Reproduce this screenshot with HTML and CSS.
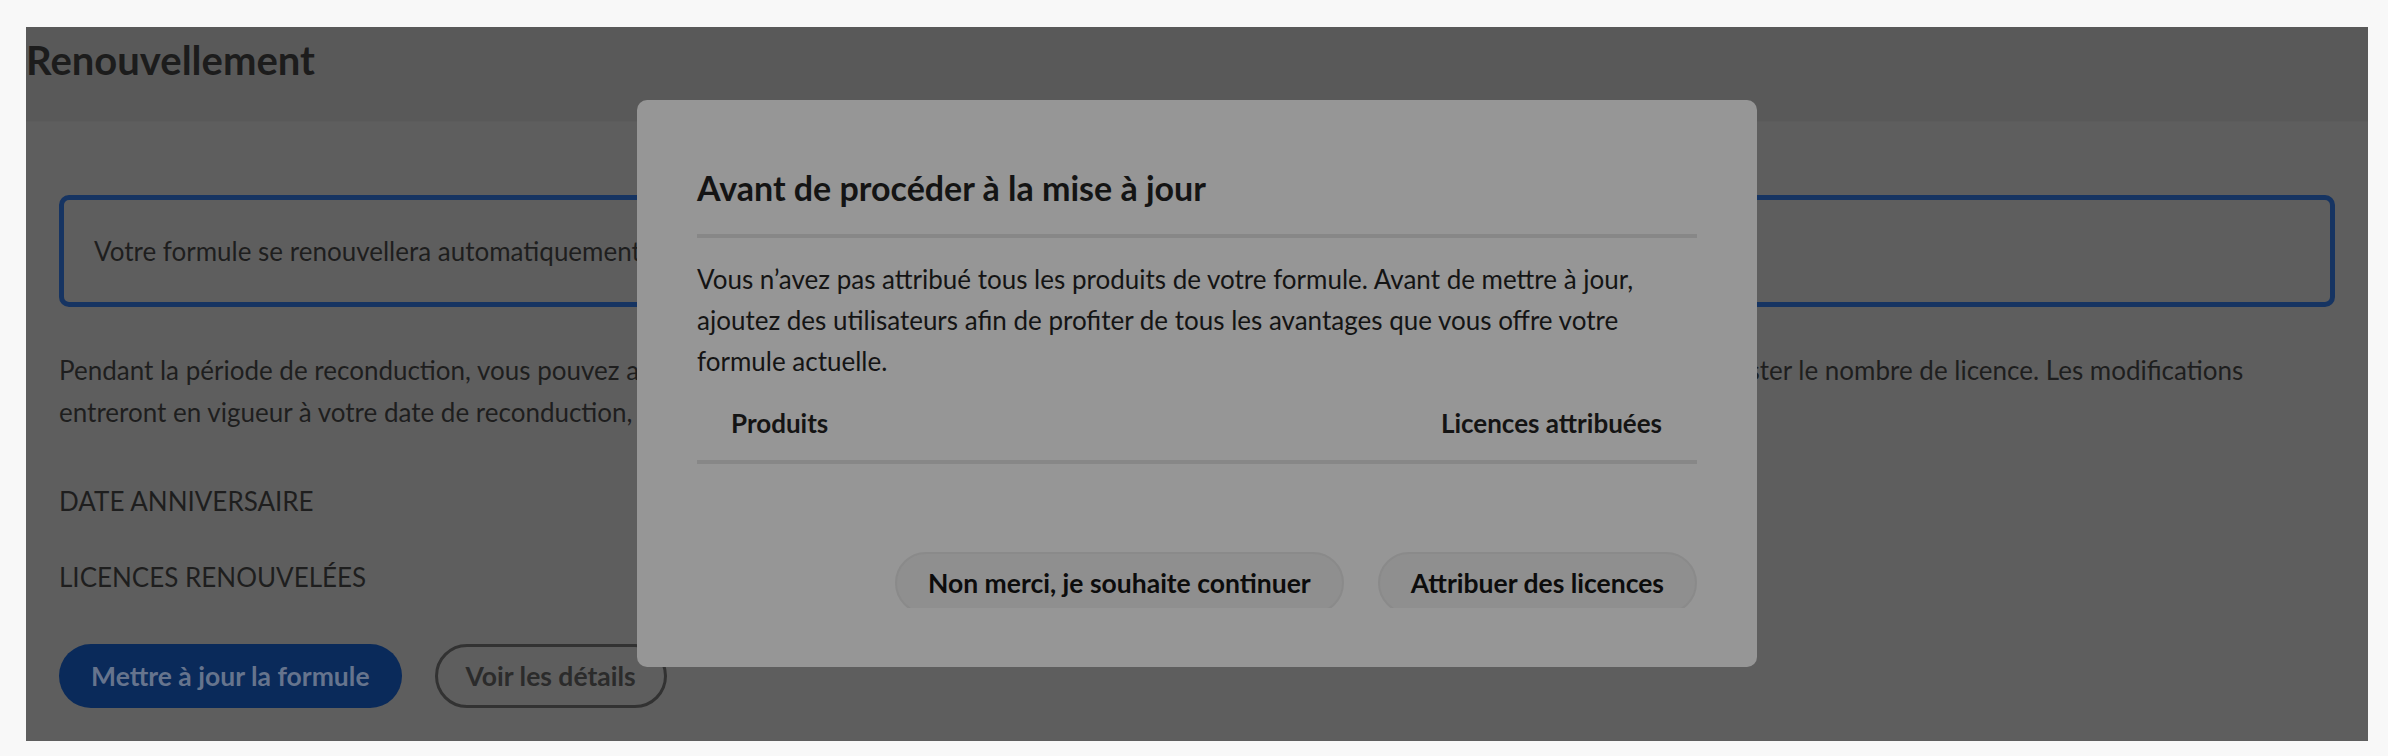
FILE: index.html
```html
<!DOCTYPE html>
<html lang="fr">
<head>
  <meta charset="UTF-8">
  <meta name="viewport" content="width=device-width, initial-scale=1.0">
  <title>Renouvellement</title>
  <link rel="stylesheet" href="styles.css">
</head>

<body>
  <div class="page">
    <div class="page-header">
      <h1>Renouvellement</h1>
    </div>

    <div class="content">
      <div class="notice">
        Votre formule se renouvellera automatiquement le 12 mars.
      </div>

      <p class="intro">
        Pendant la période de reconduction, vous pouvez ajouter ou retirer des licences, ajouter d’autres produits ou retirer les produits non utilisés afin d’ajuster le nombre de licence. Les modifications<br>
        entreront en vigueur à votre date de reconduction, le jour suivant.
      </p>

      <div class="field">DATE ANNIVERSAIRE</div>
      <div class="field">LICENCES RENOUVELÉES</div>

      <div class="actions">
        <button class="btn btn-primary">Mettre à jour la formule</button>
        <button class="btn btn-outline">Voir les détails</button>
      </div>
    </div>

    <div class="modal">
      <h2>Avant de procéder à la mise à jour</h2>
      <p>Vous n’avez pas attribué tous les produits de votre formule. Avant de mettre à jour, ajoutez des utilisateurs afin de profiter de tous les avantages que vous offre votre formule actuelle.</p>

      <div class="table-head">
        <span>Produits</span>
        <span>Licences attribuées</span>
      </div>

      <div class="modal-footer">
        <button class="btn btn-modal">Non merci, je souhaite continuer</button>
        <button class="btn btn-modal">Attribuer des licences</button>
      </div>
    </div>
  </div>
</body>
</html>
```

FILE: styles.css
```css
* {
  box-sizing: border-box;
}

body {
  font-family: Lato, 'Noto Sans', sans-serif;
  background: #f8f8f8;
  margin: 0;
  padding: 27px 20px 15px 26px;
  color: #1d1d1d;
}

.page {
  position: relative;
  height: 714px;
  background: #5e5e5e;
  overflow: hidden;
}

.page-header {
  height: 95px;
  background: #595959;
  border-bottom: 1px solid #5c5c5c;
}

h1 {
  margin: 0;
  padding-top: 9px;
  font-size: 40px;
  line-height: 48px;
  font-weight: 700;
  color: #1c1c1c;
}

.content {
  padding: 73px 33px 0;
}

.notice {
  height: 112px;
  border: 5px solid #163462;
  border-radius: 10px;
  padding: 0 30px;
  display: flex;
  align-items: center;
  font-size: 26px;
  color: #1e1e1e;
}

.intro {
  margin: 42px 0 0;
  font-size: 26px;
  line-height: 42px;
  color: #1e1e1e;
}

.field {
  margin-top: 48px;
  font-size: 26px;
  line-height: 40px;
  color: #1e1e1e;
}

.field + .field {
  margin-top: 36px;
}

.actions {
  display: flex;
  gap: 33px;
  margin-top: 47px;
}

.btn {
  font-family: inherit;
  font-weight: 700;
  cursor: pointer;
}

.btn-primary {
  height: 64px;
  padding: 0 32px;
  font-size: 26.5px;
  background: #0a2a5a;
  color: #66748d;
  border: none;
  border-radius: 32px;
}

.btn-outline {
  height: 64px;
  padding: 0 28px;
  font-size: 26.5px;
  background: transparent;
  color: #2b2b2b;
  border: 3px solid #323232;
  border-radius: 32px;
}

.modal {
  position: absolute;
  left: 611px;
  top: 73px;
  width: 1120px;
  height: 567px;
  background: #969696;
  border-radius: 10px;
  padding: 68px 60px 0;
}

.modal h2 {
  margin: 0;
  font-size: 34px;
  line-height: 40px;
  font-weight: 700;
  color: #141414;
  padding-bottom: 26px;
  border-bottom: 4px solid #878787;
}

.modal p {
  margin: 21px 0 0;
  font-size: 26px;
  line-height: 41px;
  color: #141414;
}

.table-head {
  display: flex;
  justify-content: space-between;
  padding: 26px 35px 22px 34px;
  border-bottom: 4px solid #878787;
  font-size: 26px;
  font-weight: 700;
  line-height: 30px;
  color: #141414;
}

.modal-footer {
  display: flex;
  justify-content: flex-end;
  gap: 34px;
  margin-top: 88px;
  height: 56px;
  overflow: hidden;
}

.btn-modal {
  flex: none;
  height: 62px;
  padding: 0 31px;
  font-size: 26.5px;
  background: #8f8f8f;
  color: #0c0c0c;
  border: 2px solid #8a8a8a;
  border-radius: 31px;
}
```
